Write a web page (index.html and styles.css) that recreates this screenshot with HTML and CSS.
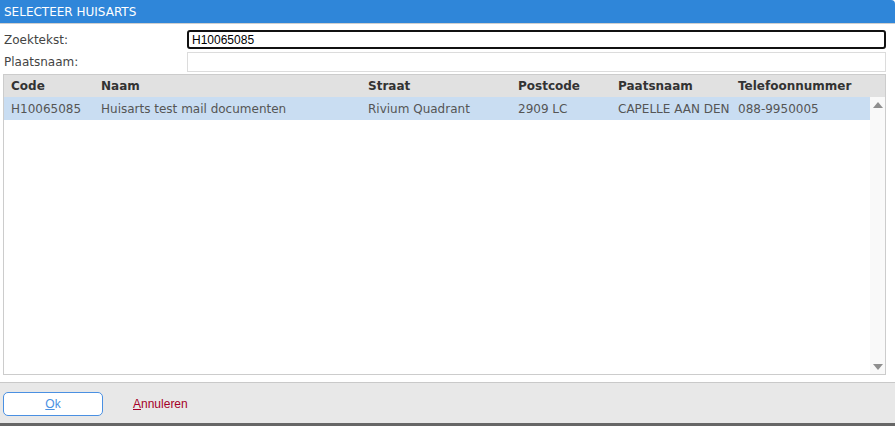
FILE: index.html
```html
<!DOCTYPE html>
<html lang="nl">
<head>
    <meta charset="UTF-8">
    <title>Selecteer huisarts</title>
    <link rel="stylesheet" href="styles.css">
</head>
<body>
    <div class="dialog">
        <div class="titlebar">SELECTEER HUISARTS</div>

        <div class="search">
            <label class="label" for="zoek">Zoektekst:</label>
            <input class="field focused" id="zoek" type="text" value="H10065085">
            <label class="label" for="plaats">Plaatsnaam:</label>
            <input class="field" id="plaats" type="text" value="">
        </div>

        <div class="grid">
            <div class="grid-head">
                <div class="cell c-code">Code</div>
                <div class="cell c-naam">Naam</div>
                <div class="cell c-straat">Straat</div>
                <div class="cell c-post">Postcode</div>
                <div class="cell c-plaats">Paatsnaam</div>
                <div class="cell c-tel">Telefoonnummer</div>
            </div>
            <div class="grid-body">
                <div class="rows">
                    <div class="row selected">
                        <div class="cell c-code">H10065085</div>
                        <div class="cell c-naam">Huisarts test mail documenten</div>
                        <div class="cell c-straat">Rivium Quadrant</div>
                        <div class="cell c-post">2909 LC</div>
                        <div class="cell c-plaats">CAPELLE AAN DEN</div>
                        <div class="cell c-tel">088-9950005</div>
                    </div>
                </div>
                <div class="scrollbar">
                    <span class="arrow up"></span>
                    <span class="arrow down"></span>
                </div>
            </div>
        </div>

        <div class="footer">
            <button class="btn-ok" type="button"><u>O</u>k</button>
            <a class="link-cancel" href="#"><u>A</u>nnuleren</a>
        </div>
        <div class="bottom-bar"></div>
    </div>
</body>
</html>
```

FILE: styles.css
```css
body {
    margin: 0;
    padding: 0;
    background-color: #ffffff;
    font-family: "DejaVu Sans", Verdana, sans-serif;
    font-size: 12px;
    color: #444;
}

.dialog {
    display: flex;
    flex-direction: column;
    height: 426px;
}

.titlebar {
    height: 23px;
    line-height: 24px;
    padding-left: 4px;
    background-color: #2f86d9;
    color: #ffffff;
    border-bottom: 1px solid #cfcfcf;
    border-top-right-radius: 4px;
}

/* zoekvelden */
.search {
    display: grid;
    grid-template-columns: 183px 1fr;
    row-gap: 3px;
    align-items: center;
    margin: 6px 9px 0 4px;
}

.label {
    color: #444;
}

.field {
    box-sizing: border-box;
    height: 19px;
    margin: 0;
    padding: 0 4px;
    font-family: "Liberation Sans", Arial, sans-serif;
    font-size: 12px;
    color: #000;
    background: #fff;
    border: 1px solid #dcdcdc;
    outline: none;
}

.field.focused {
    border: 2px solid #111;
    border-radius: 3px;
    padding: 0 3px;
}

#plaats {
    height: 20px;
}

/* resultaten */
.grid {
    height: 299px;
    margin: 2px 9px 0 3px;
    border: 1px solid #cccccc;
    display: flex;
    flex-direction: column;
}

.grid-head {
    display: flex;
    height: 22px;
    align-items: center;
    background-color: #e1e1e1;
    font-weight: bold;
    color: #333;
}

.grid-body {
    flex: 1;
    display: flex;
}

.rows {
    flex: 1;
}

.row {
    display: flex;
    height: 23px;
    align-items: center;
    color: #555;
}

.row.selected {
    background-color: #c9ddf2;
}

.cell {
    box-sizing: border-box;
    padding-left: 7px;
    white-space: nowrap;
    overflow: hidden;
}

.c-code { width: 90px; }
.c-naam { width: 267px; }
.c-straat { width: 150px; }
.c-post { width: 100px; }
.c-plaats { width: 120px; }
.c-tel { flex: 1; }

.scrollbar {
    width: 15px;
    background-color: #f9f9f9;
    display: flex;
    flex-direction: column;
    justify-content: space-between;
    align-items: center;
    padding: 5px 0 4px;
}

.arrow {
    width: 0;
    height: 0;
    border-left: 5px solid transparent;
    border-right: 5px solid transparent;
}

.arrow.up {
    border-bottom: 6px solid #8f8f8f;
}

.arrow.down {
    border-top: 6px solid #8f8f8f;
}

/* knoppen */
.footer {
    margin-top: 7px;
    flex: 1;
    display: flex;
    align-items: flex-start;
    gap: 30px;
    padding: 9px 0 0 3px;
    background-color: #e8e8e8;
    border-top: 1px solid #c9c9c9;
}

.btn-ok {
    width: 100px;
    height: 24px;
    padding: 0;
    background: #fff;
    border: 1px solid #4a90e2;
    border-radius: 5px;
    color: #4a90e2;
    font-family: "Liberation Sans", Arial, sans-serif;
    font-size: 12px;
}

.link-cancel {
    line-height: 24px;
    color: #a50028;
    text-decoration: none;
    font-family: "Liberation Sans", Arial, sans-serif;
    font-size: 12px;
}

.bottom-bar {
    height: 3px;
    background-color: #666;
}
```
